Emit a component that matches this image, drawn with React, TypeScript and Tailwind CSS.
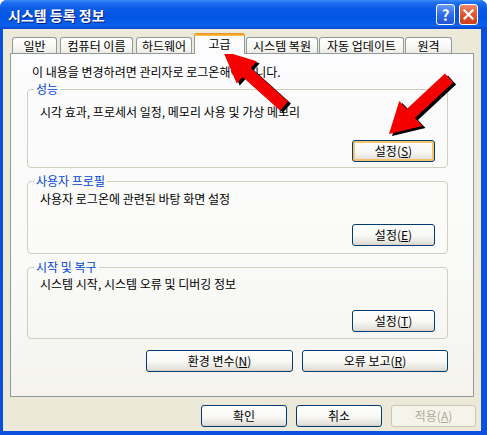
import React from "react";

const font = "font-['Noto_Sans_CJK_KR','Noto_Sans',sans-serif]";

type Pt = [number, number];

// builds the outline of a block arrow from tip to tail
function arrowPoints(tip: Pt, tail: Pt, headLen: number, headHalf: number, shaftHalf: number, off: Pt = [0, 0]) {
  const dx = tail[0] - tip[0];
  const dy = tail[1] - tip[1];
  const len = Math.hypot(dx, dy);
  const ux = dx / len;
  const uy = dy / len;
  const nx = -uy;
  const ny = ux;
  const p = (a: number, b: number) =>
    `${(tip[0] + ux * a + nx * b + off[0]).toFixed(1)},${(tip[1] + uy * a + ny * b + off[1]).toFixed(1)}`;
  return [
    p(0, 0),
    p(headLen, headHalf),
    p(headLen, shaftHalf),
    p(len, shaftHalf),
    p(len, -shaftHalf),
    p(headLen, -shaftHalf),
    p(headLen, -headHalf),
  ].join(" ");
}

function Button({
  children,
  className,
  disabled,
  hot,
}: {
  children: React.ReactNode;
  className: string;
  disabled?: boolean;
  hot?: boolean;
}) {
  const base = "h-[22px] rounded-[3px] border flex items-center justify-center text-[12px] leading-none shrink-0";
  if (disabled) {
    return (
      <div className={`${base} ${className} border-[#C9C7BA] bg-[#F5F4EA] text-[#ACA899]`}>{children}</div>
    );
  }
  return (
    <div
      className={`${base} ${className} border-[#003C74] bg-[linear-gradient(180deg,#FFFFFF_0%,#F7F7F4_55%,#E3E1D9_90%,#D6D0C5_100%)] text-black ${
        hot ? "shadow-[inset_0_0_0_2px_#F6C36A]" : ""
      }`}
    >
      {children}
    </div>
  );
}

function Group({
  label,
  text,
  btn,
  className,
  hot,
}: {
  label: string;
  text: string;
  btn: React.ReactNode;
  className: string;
  hot?: boolean;
}) {
  return (
    <div className={`relative w-[421px] border border-[#D0D0BF] rounded-[4px] flex flex-col ${className}`}>
      <span className="absolute left-[6px] -top-[7px] px-[2px] bg-[#FBFBF9] text-[#0046D5] text-[12px] leading-[12px]">
        {label}
      </span>
      <div className="pl-[12px] text-[12px] leading-[16px] text-black">{text}</div>
      <div className="mt-auto flex justify-end pr-[12px]">
        <Button className="w-[83px]" hot={hot}>
          {btn}
        </Button>
      </div>
    </div>
  );
}

const tabs = [
  { label: "일반", cls: "ml-[2px] w-[45px]" },
  { label: "컴퓨터 이름", cls: "ml-[3px] w-[73px]" },
  { label: "하드웨어", cls: "ml-[3px] w-[56px]" },
  { label: "고급", cls: "ml-[2px] w-[51px]", active: true },
  { label: "시스템 복원", cls: "ml-[1px] w-[72px]" },
  { label: "자동 업데이트", cls: "ml-[1px] w-[85px]" },
  { label: "원격", cls: "ml-[1px] w-[47px]" },
];

export default function App() {
  return (
    <div className={`relative w-[487px] h-[435px] bg-[#0A4FDE] rounded-t-[7px] flex flex-col overflow-hidden ${font}`}>
      {/* title bar */}
      <div className="h-[29px] shrink-0 flex items-center pl-[8px] pr-[9px] bg-[linear-gradient(180deg,#3C8CF7_0%,#1C6EF0_10%,#0A5BE6_30%,#0256E4_60%,#0A5FEC_88%,#0647CF_100%)]">
        <span className="text-white font-bold text-[14px] leading-none [text-shadow:1px_1px_0_#0A1F80]">
          시스템 등록 정보
        </span>
        <div className="ml-auto flex gap-[4px]">
          <div className="w-[19px] h-[21px] rounded-[3px] border border-white bg-[linear-gradient(180deg,#6A9BF9_0%,#2F6CEB_50%,#1F55D6_100%)] flex items-center justify-center text-white font-bold text-[15px] leading-none">
            ?
          </div>
          <div className="w-[19px] h-[21px] rounded-[3px] border border-white bg-[linear-gradient(180deg,#F08A6C_0%,#E1542F_50%,#C9401B_100%)] flex items-center justify-center">
            <svg width="11" height="11" viewBox="0 0 11 11">
              <path d="M1.5 1.5 L9.5 9.5 M9.5 1.5 L1.5 9.5" stroke="white" strokeWidth="2.2" strokeLinecap="square" />
            </svg>
          </div>
        </div>
      </div>

      {/* body */}
      <div className="flex-1 ml-[3px] mr-[6px] mb-[4px] bg-[#ECE9D8] flex flex-col px-[7px]">
        {/* tabs */}
        <div className="h-[24px] flex items-end shrink-0">
          {tabs.map((t) =>
            t.active ? (
              <div
                key={t.label}
                className={`${t.cls} relative z-10 -mb-px h-[21px] border-x border-[#919B9C] rounded-t-[3px] bg-[#FCFCFE] flex flex-col`}
              >
                <div className="h-[3px] -mx-px rounded-t-[3px] bg-[linear-gradient(180deg,#E68B2C_0%,#FFC73C_100%)]" />
                <div className="flex-1 flex items-center justify-center text-[12px] leading-none text-black pb-[2px]">
                  {t.label}
                </div>
              </div>
            ) : (
              <div
                key={t.label}
                className={`${t.cls} h-[16px] border-x border-t border-[#919B9C] rounded-t-[3px] bg-[linear-gradient(180deg,#FFFFFF_0%,#F7F7F3_60%,#ECEBE6_100%)] flex items-center justify-center text-[12px] leading-none text-black`}
              >
                {t.label}
              </div>
            )
          )}
        </div>

        {/* panel */}
        <div className="w-[464px] h-[344px] border border-[#919B9C] bg-[linear-gradient(180deg,#FCFCFE_0%,#FAFAF8_60%,#F4F3EE_100%)] flex flex-col pl-[16px]">
          <div className="mt-[11px] ml-[5px] text-[12px] leading-[14px] text-black">
            이 내용을 변경하려면 관리자로 로그온해야 합니다.
          </div>
          <Group
            className="mt-[10px] h-[79px] pt-[14px] pb-[5px]"
            label="성능"
            text="시각 효과, 프로세서 일정, 메모리 사용 및 가상 메모리"
            hot
            btn={
              <>
                설정(<u>S</u>)
              </>
            }
          />
          <Group
            className="mt-[13px] h-[73px] pt-[9px] pb-[7px]"
            label="사용자 프로필"
            text="사용자 로그온에 관련된 바탕 화면 설정"
            btn={
              <>
                설정(<u>E</u>)
              </>
            }
          />
          <Group
            className="mt-[13px] h-[72px] pt-[8px] pb-[6px]"
            label="시작 및 복구"
            text="시스템 시작, 시스템 오류 및 디버깅 정보"
            btn={
              <>
                설정(<u>T</u>)
              </>
            }
          />
          <div className="w-[421px] mt-[11px] flex justify-end gap-[9px]">
            <Button className="w-[147px]">
              환경 변수(<u>N</u>)
            </Button>
            <Button className="w-[146px]">
              오류 보고(<u>R</u>)
            </Button>
          </div>
        </div>

        {/* dialog buttons */}
        <div className="mt-[8px] flex justify-end gap-[9px] -mr-[2px]">
          <Button className="w-[86px]">확인</Button>
          <Button className="w-[86px]">취소</Button>
          <Button className="w-[85px]" disabled>
            적용(<u>A</u>)
          </Button>
        </div>
      </div>

      {/* red arrows drawn over the dialog */}
      <svg className="absolute inset-0 pointer-events-none" width="487" height="435" viewBox="0 0 487 435">
        <polygon points={arrowPoints([223, 51], [284, 106], 32, 15, 6, [3, 2])} fill="#000" />
        <polygon points={arrowPoints([223, 51], [284, 106], 32, 15, 6)} fill="#F40000" />
        <polygon points={arrowPoints([389, 134], [449, 78], 30, 17, 6, [3, 2])} fill="#000" />
        <polygon points={arrowPoints([389, 134], [449, 78], 30, 17, 6)} fill="#F40000" />
      </svg>
    </div>
  );
}
